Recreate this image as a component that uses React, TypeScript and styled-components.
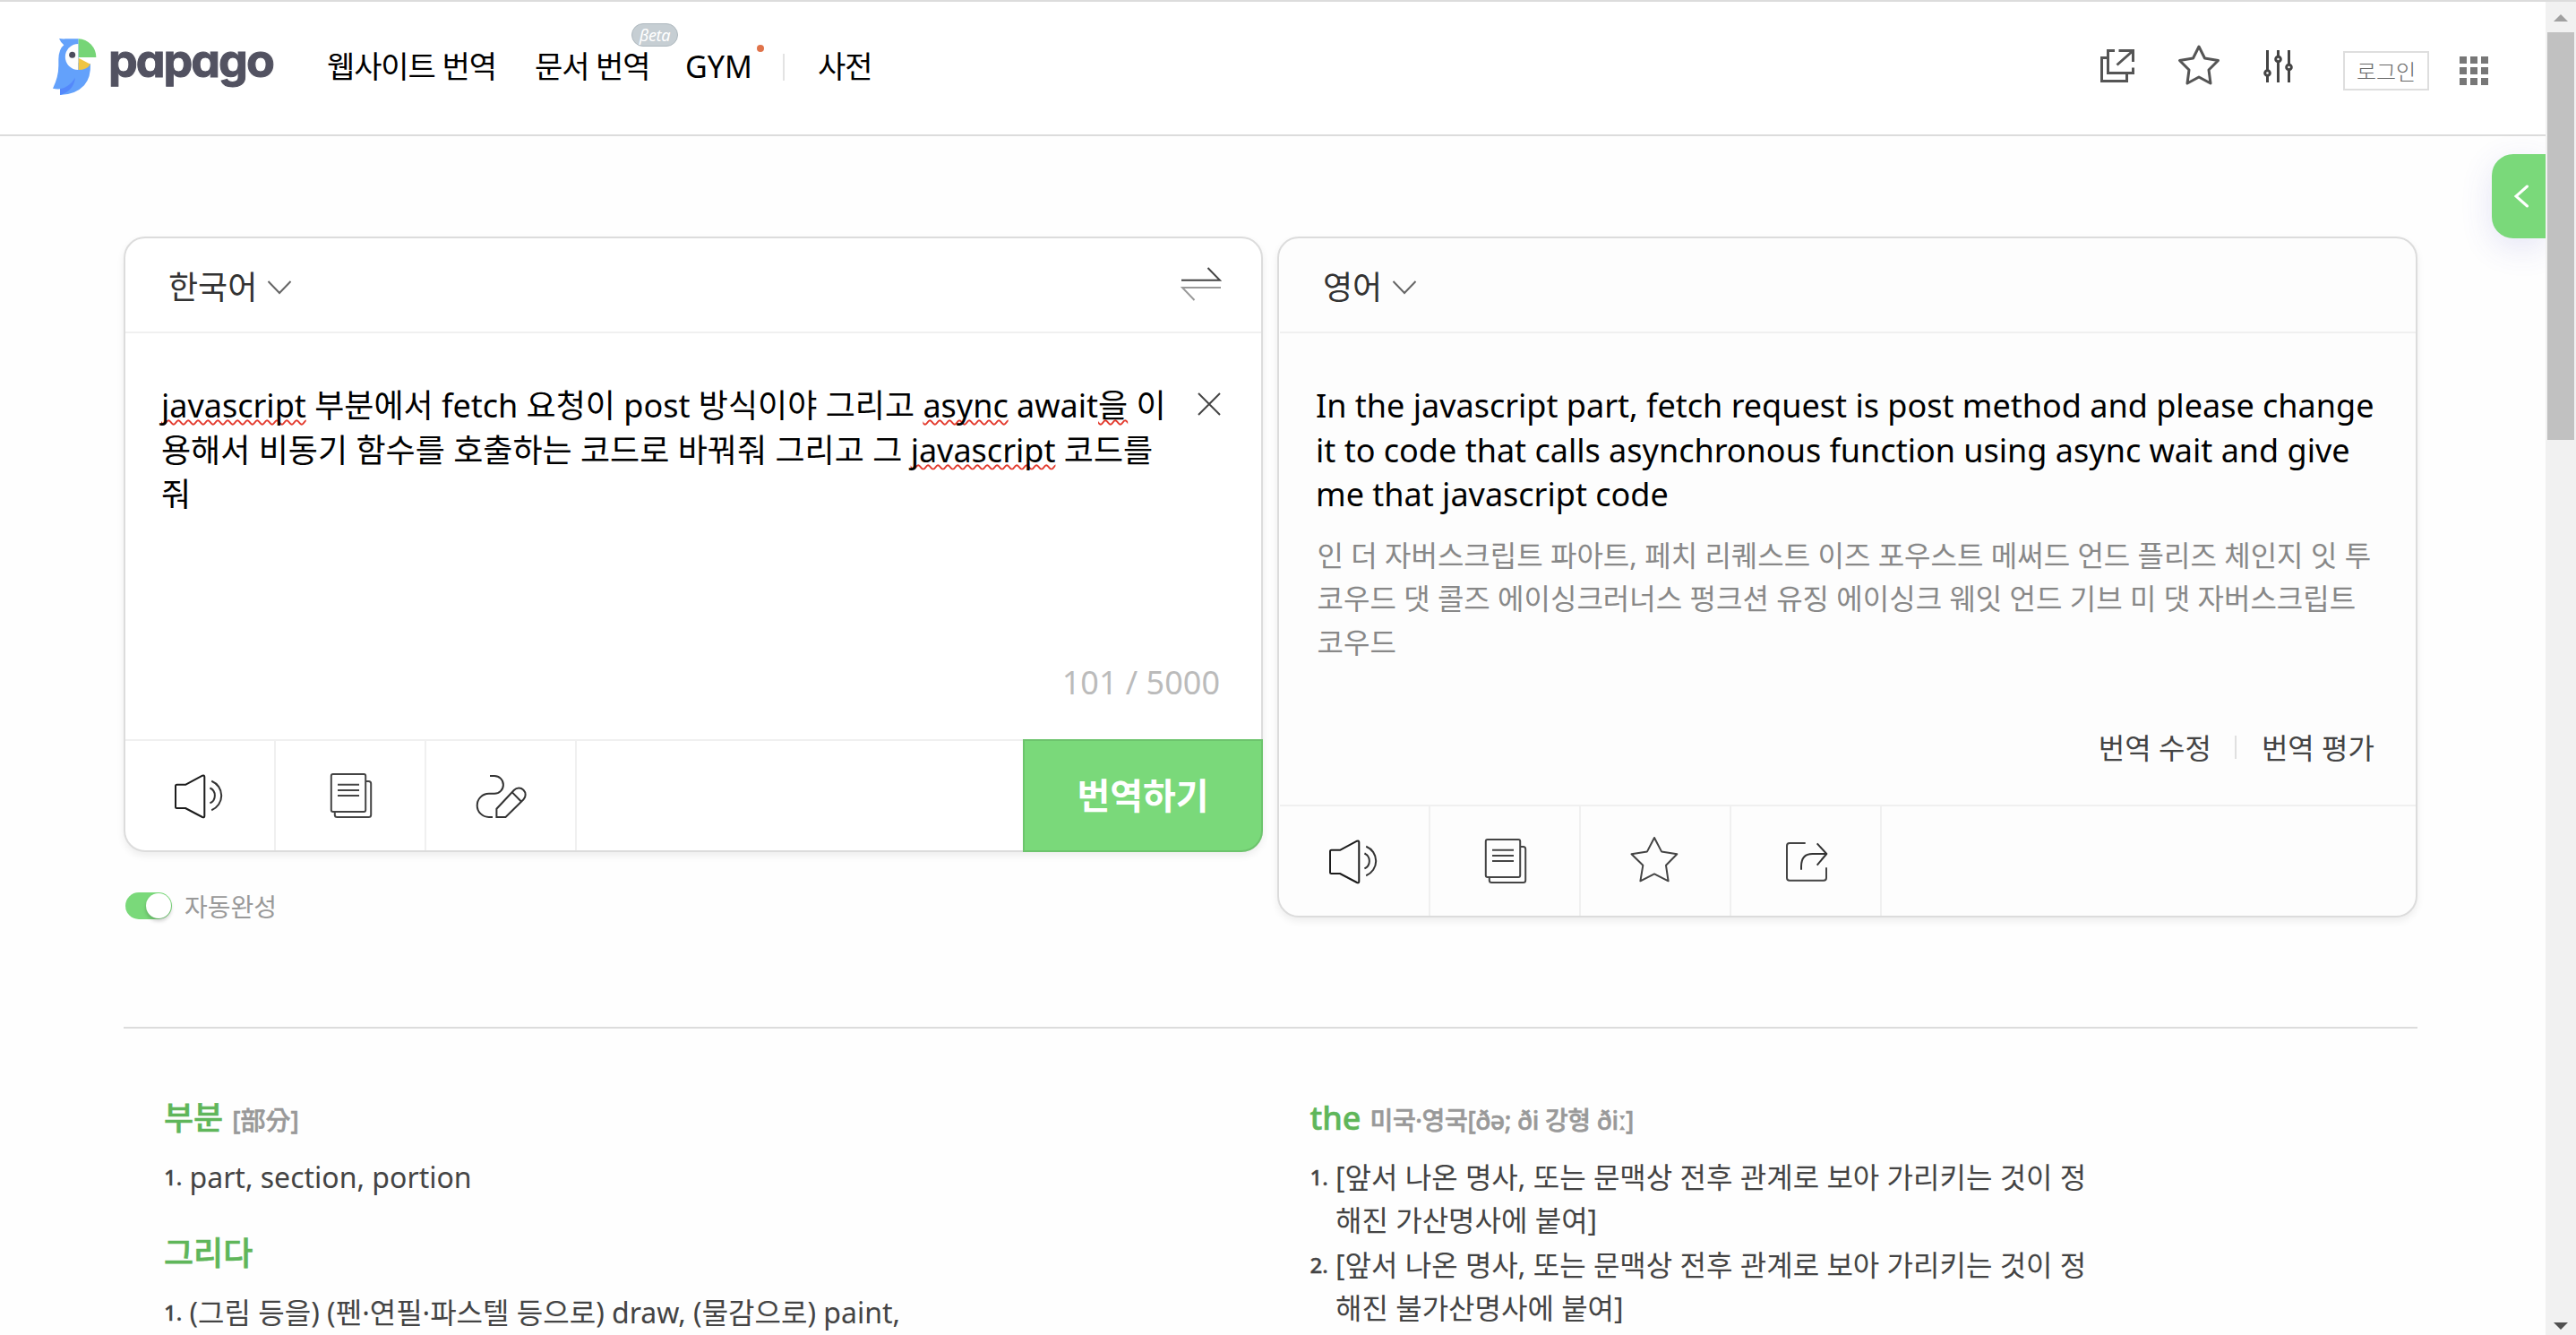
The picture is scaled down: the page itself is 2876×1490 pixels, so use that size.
import React from 'react';
import styled, { createGlobalStyle } from 'styled-components';

let GlobalStyle = createGlobalStyle`
  * { box-sizing: border-box; }
  body {
    margin: 0;
    background: #fff;
    overflow: hidden;
    font-family: "Noto Sans", "Noto Sans CJK KR", sans-serif;
  }
  svg { display: block; flex: none; }`

let Page = styled.div`
  position: relative;
  display: flex;
  height: 1490px;
  overflow: hidden;
  border-top: 2px solid #dcdcdc;`

let Content = styled.div`
  width: 2842px;
  background: #fefefe;`

let Header = styled.header`
  display: flex;
  align-items: flex-start;
  height: 150px;
  padding-left: 58px;
  background: #fff;
  border-bottom: 2px solid #dcdcdc;`

let Logo = styled.a`
  display: flex;
  padding-top: 38px;
  width: 303px;`

let Wordmark = styled.span`
  margin: -4px 0 0 13px;
  font-family: Inter, sans-serif;
  font-feature-settings: "cv11";
  font-size: 52px;
  font-weight: 700;
  line-height: 64px;
  letter-spacing: -2px;
  color: #525261;
  -webkit-text-stroke: 1px #525261;`

let Nav = styled.nav`
  display: flex;
  padding-top: 47px;
  font-size: 34px;
  line-height: 50px;
  white-space: nowrap;`

let NavItem = styled.a<{ $width: number; $spacing?: number }>`
  position: relative;
  width: ${(p) => p.$width}px;
  padding-left: 4px;
  color: #000;
  letter-spacing: ${(p) => p.$spacing ?? -1.1}px;`

let BetaBadge = styled.i`
  position: absolute;
  top: -23px;
  left: 112px;
  width: 52px;
  height: 26px;
  border: 1px solid #aeb8be;
  border-radius: 13px;
  background: #c6ced3;
  color: #fff;
  font-family: "Noto Sans", sans-serif;
  font-size: 18px;
  line-height: 24px;
  letter-spacing: -0.3px;
  text-align: center;`

let NewDot = styled.i`
  position: absolute;
  top: 1px;
  left: 84px;
  width: 8px;
  height: 8px;
  border-radius: 50%;
  background: #e0734a;`

let NavDivider = styled.i`
  width: 2px;
  height: 30px;
  margin: 11px 33px 0 1px;
  background: #e3e3e3;`

let Tools = styled.div`
  display: flex;
  margin-left: auto;
  padding-right: 64px;`

let ToolIcon = styled.a<{ $top: number; $right: number }>`
  margin: ${(p) => p.$top}px ${(p) => p.$right}px 0 0;`

let LoginButton = styled.a`
  width: 96px;
  height: 44px;
  margin: 55px 34px 0 0;
  border: 2px solid #dedede;
  color: #666;
  font-size: 24px;
  font-weight: 300;
  line-height: 42px;
  text-align: center;`

let Apps = styled.div`
  display: grid;
  grid-template-columns: repeat(3, 8px);
  grid-auto-rows: 8px;
  gap: 4px;
  margin-top: 61px;
  i { background: #777; }`

let Main = styled.main`
  padding: 112px 0 0 138px;
  width: 2699px;`

let Panels = styled.div`
  display: flex;
  align-items: flex-start;
  justify-content: space-between;
  height: 760px;`

let Panel = styled.section<{ $target?: boolean }>`
  display: flex;
  flex-direction: column;
  width: ${(p) => (p.$target ? 1273 : 1272)}px;
  height: ${(p) => (p.$target ? 760 : 687)}px;
  padding-left: ${(p) => (p.$target ? 1 : 0)}px;
  border: 2px solid #dcdcdc;
  border-radius: 24px;
  background: ${(p) => (p.$target ? '#fdfdfd' : '#fff')};
  box-shadow: 0 4px 8px rgba(0, 0, 0, 0.07);`

let PanelHead = styled.div`
  display: flex;
  justify-content: space-between;
  height: 106px;
  padding: 30px 44px 0 48px;
  border-bottom: 2px solid #f0f0f0;
  > svg { margin-top: -2px; }`

let Language = styled.div`
  display: flex;
  color: #333;
  font-size: 36px;
  line-height: 50px;
  svg { margin: 17px 0 0 11px; }`

let PanelBody = styled.div`
  display: flex;
  flex: 1;
  flex-direction: column;
  padding: 56px 46px 38px 40px;`

let SourceRow = styled.div`
  display: flex;
  justify-content: space-between;
  svg { margin: 10px -1px 0 0; }`

let BigText = styled.div`
  font-size: 36px;
  line-height: 49.5px;
  white-space: nowrap;
  color: #000;`

let Typo = styled.span`
  text-decoration: underline wavy #e3392c 1.5px;
  text-decoration-skip-ink: none;
  text-underline-offset: 2px;`

let Pronunciation = styled.div`
  margin: 19px 0 0 1.5px;
  color: #888;
  font-size: 32px;
  line-height: 48.5px;
  white-space: nowrap;`

let Counter = styled.div`
  margin-top: auto;
  text-align: right;
  color: #bbb;
  font-size: 36px;
  line-height: 50px;`

let Feedback = styled.div`
  display: flex;
  justify-content: flex-end;
  margin-top: auto;
  color: #444;
  font-size: 32px;
  line-height: 50px;
  i {
    width: 2px;
    height: 26px;
    margin: 11px 28px 0 26px;
    background: #e0e0e0;
  }`

let Toolbar = styled.div`
  display: flex;
  height: 124px;
  border-top: 2px solid #f0f0f0;`

let ToolCell = styled.div`
  display: flex;
  align-items: center;
  justify-content: center;
  width: 168px;
  border-right: 2px solid #f0f0f0;`

let TranslateButton = styled.button`
  width: 268px;
  margin: -2px -2px -2px auto;
  padding: 0;
  border: 2px solid #6dc46d;
  border-radius: 0 0 24px 0;
  background: #7ad97a;
  color: #fff;
  font-family: inherit;
  font-size: 40px;
  font-weight: 700;
  line-height: 50px;`

let AutoComplete = styled.div`
  display: flex;
  margin-top: 45px;
  padding-left: 2px;
  color: #999;
  font-size: 28px;
  line-height: 32px;`

let Switch = styled.span`
  display: flex;
  justify-content: flex-end;
  width: 52px;
  height: 30px;
  margin-right: 14px;
  padding: 1px;
  border-radius: 15px;
  background: #7ad97a;
  i {
    width: 28px;
    height: 28px;
    border-radius: 50%;
    background: #fff;
    box-shadow: 0 3px 4px rgba(0, 0, 0, 0.2);
  }`

let Dictionary = styled.div`
  display: flex;
  margin-top: 122px;
  padding: 75px 0 0 45px;
  border-top: 2px solid #dcdcdc;`

let DictColumn = styled.div`
  flex: none;
  width: 1279.5px;`

let Entry = styled.div`
  margin-bottom: 35.5px;`

let Word = styled.div`
  height: 50px;
  margin-bottom: 17px;
  color: #5fb65a;
  font-size: 36px;
  font-weight: 500;
  line-height: 50px;
  -webkit-text-stroke: 0.6px;`

let Reading = styled.small<{ $tight?: boolean }>`
  margin-left: 10px;
  color: #999;
  font-size: 28px;
  letter-spacing: ${(p) => (p.$tight ? -0.35 : 0)}px;`

let Meaning = styled.div`
  display: flex;
  margin-bottom: 1.5px;
  color: #444;
  font-size: 32px;
  line-height: 48px;
  white-space: nowrap;
  b {
    width: 28.5px;
    font-size: 24px;
    font-weight: 500;
    -webkit-text-stroke: 0.4px;
  }`

let SideTab = styled.div`
  position: absolute;
  top: 170px;
  left: 2782px;
  display: flex;
  align-items: center;
  width: 60px;
  height: 94px;
  padding-left: 24px;
  border-radius: 24px 0 0 24px;
  background: #7ad97a;
  box-shadow: 0 10px 36px rgba(70, 70, 190, 0.14);`

let Scrollbar = styled.div`
  position: relative;
  z-index: 1;
  display: flex;
  flex-direction: column;
  align-items: center;
  width: 34px;
  height: 1488px;
  padding-bottom: 6px;
  background: #f1f1f1;`

let Thumb = styled.div`
  width: 30px;
  height: 455px;
  margin: 12px 0 auto;
  background: #c1c1c1;`

let Arrow = styled.i<{ $down?: boolean }>`
  flex: none;
  margin-top: ${(p) => (p.$down ? 0 : 14)}px;
  border: 8px solid transparent;
  border-${(p) => (p.$down ? 'bottom' : 'top')}-width: 0;
  border-${(p) => (p.$down ? 'top-color: #505050' : 'bottom-color: #a0a0a0')};`

function Parrot() {
  return (
    <svg width="50" height="68" viewBox="54 60 150 204">
      <path fill="#63a1fb" d="M78 69Q90 71 100 70H143V150L183 154Q185 200 162 226Q132 258 81 258V238Q68 239 57 236Q76 198 76 160V138Q77 104 94 91Q83 82 78 69Z" />
      <path fill="#5488fb" d="M132 200Q112 232 81 238V258Q126 245 132 200Z" />
      <path fill="#fdfdfd" d="M142 87A43 43 0 0 0 142 174Z" />
      <path fill="#76d577" d="M143 70A59 62 0 0 1 202 132H143Z" />
      <path fill="#efc543" d="M143 134L183 155Q170 174 143 174Z" />
      <circle cx="122" cy="124" r="10.5" fill="#4b4c5b" />
    </svg>
  );
}

function IconBox({ children }: { children: React.ReactNode }) {
  return (
    <svg width="64" height="64" viewBox="0 0 64 64" fill="none" stroke="#333" strokeWidth="2" strokeLinejoin="round">
      {children}
    </svg>
  );
}

function SpeakerIcon() {
  return (
    <IconBox>
      <path stroke="#1c1c1c" d="M6.5 19.8H16L35 9.7Q37.3 8.8 37.3 11V54.7Q37.3 57 35 56L16 46H6.5Q5 46 5 44.5V21.3Q5 19.8 6.5 19.8Z" />
      <path d="M43.4 23.5A9.2 9.2 0 0 1 43.4 40.3M45.2 15.7A17.5 17.5 0 0 1 45.2 48.2" />
    </IconBox>
  );
}

function CopyIcon() {
  return (
    <IconBox>
      <g stroke="#444">
        <rect x="10.8" y="8" width="38.4" height="42" rx="2" />
        <path d="M18 19.8H42M18 26H42M18 32H42" />
        <path d="M49.5 16H52.5Q55.2 16 55.2 18.5V53.5Q55.2 56 52.5 56H17.5Q14.8 56 14.8 53.5V50" />
      </g>
    </IconBox>
  );
}

function PenIcon() {
  return (
    <IconBox>
      <path d="M20 10H25A9.9 9.9 0 0 1 25 29.8H18.8A13.1 13.1 0 0 0 18.8 56H23" />
      <path strokeLinejoin="miter" d="M27.4 56V46.7L47 25.8A7.3 7.3 0 0 1 57.5 36.2L37.5 56ZM44.9 28.4L54.6 38.2" />
    </IconBox>
  );
}

function StarIcon() {
  return (
    <IconBox>
      <path stroke="#444" d="M31 6L39 21.4L56.3 24.3L44 36.8L46.6 54.3L31 46.4L15.4 54.3L18.3 36.8L5.5 24.3L23 21.4Z" />
    </IconBox>
  );
}

function ShareIcon() {
  return (
    <IconBox>
      <path stroke="#444" d="M31.7 12H14Q11 12 11 15V50.7Q11 53.7 14 53.7H52Q55 53.7 55 50.7V39.3" />
      <path d="M27 41.7V38Q27 24 39.5 24H55M44.7 12.3L55.3 24L44.7 36.6" />
    </IconBox>
  );
}

function ChevronDown() {
  return (
    <svg width="28" height="16" viewBox="0 0 28 16" fill="none" stroke="#666" strokeWidth="2">
      <path d="M1.5 1L14 14L26.5 1" />
    </svg>
  );
}

let mainSense = '[앞서 나온 명사, 또는 문맥상 전후 관계로 보아 가리키는 것이 정';

export default function App() {
  return (
    <Page>
      <GlobalStyle />
      <Content>
        <Header>
          <Logo>
            <Parrot />
            <Wordmark>papago</Wordmark>
          </Logo>
          <Nav>
            <NavItem $width={232}>웹사이트 번역</NavItem>
            <NavItem $width={168}>문서 번역<BetaBadge>βeta</BetaBadge></NavItem>
            <NavItem $width={112} $spacing={0}>GYM<NewDot /></NavItem>
            <NavDivider />
            <NavItem $width={80}>사전</NavItem>
          </Nav>
          <Tools>
            <ToolIcon $top={52} $right={46}>
              <svg width="42" height="40" viewBox="0 0 42 40" fill="none" stroke="#555" strokeWidth="3">
                <path d="M9.5 10.5H3.5V36.5H31.5V29M18 2.5H10.5V27.5H38.5V21.5M22.5 2.5H38.5V15M38 3L20.5 18.5" />
              </svg>
            </ToolIcon>
            <ToolIcon $top={47} $right={48}>
              <svg width="48" height="48" viewBox="0 0 48 48" fill="none" stroke="#555" strokeWidth="3" strokeLinejoin="round">
                <path d="M24 3L30.5 16L45.5 18.5L35 29L37 44L24 37L11 44L13 29L2.5 18.5L17.5 16Z" />
              </svg>
            </ToolIcon>
            <ToolIcon $top={52} $right={55}>
              <svg width="34" height="40" viewBox="0 0 34 40" fill="#fff" stroke="#444" strokeWidth="3">
                <path d="M4.5 2V38M16.5 2V38M28.5 2V38" />
                <circle cx="4.5" cy="27.5" r="2.8" />
                <circle cx="16.5" cy="12" r="2.8" />
                <circle cx="28.5" cy="21" r="2.8" />
              </svg>
            </ToolIcon>
            <LoginButton>로그인</LoginButton>
            <Apps>
              {Array.from({ length: 9 }, (_, i) => <i key={i} />)}
            </Apps>
          </Tools>
        </Header>

        <Main>
          <Panels>
            <div>
              <Panel>
                <PanelHead>
                  <Language>한국어<ChevronDown /></Language>
                  <svg width="46" height="42" viewBox="0 0 46 42" fill="none" strokeWidth="2">
                    <path stroke="#444" d="M1 18.8H44L30.5 5" />
                    <path stroke="#999" d="M45 27H2L15.5 41" />
                  </svg>
                </PanelHead>
                <PanelBody>
                  <SourceRow>
                    <BigText>
                      <div><Typo>javascript</Typo> 부분에서 fetch 요청이 post 방식이야 그리고 <Typo>async</Typo> await<Typo>을</Typo> 이</div>
                      <div>용해서 비동기 함수를 호출하는 코드로 바꿔줘 그리고 그 <Typo>javascript</Typo> 코드를</div>
                      <div>줘</div>
                    </BigText>
                    <svg width="26" height="26" viewBox="0 0 26 26" stroke="#444" strokeWidth="2">
                      <path d="M1 1L25 25M25 1L1 25" />
                    </svg>
                  </SourceRow>
                  <Counter>101 / 5000</Counter>
                </PanelBody>
                <Toolbar>
                  <ToolCell><SpeakerIcon /></ToolCell>
                  <ToolCell><CopyIcon /></ToolCell>
                  <ToolCell><PenIcon /></ToolCell>
                  <TranslateButton>번역하기</TranslateButton>
                </Toolbar>
              </Panel>
              <AutoComplete>
                <Switch><i /></Switch>
                자동완성
              </AutoComplete>
            </div>

            <Panel $target>
              <PanelHead>
                <Language>영어<ChevronDown /></Language>
              </PanelHead>
              <PanelBody>
                <BigText>
                  <div>In the javascript part, fetch request is post method and please change</div>
                  <div>it to code that calls asynchronous function using async wait and give</div>
                  <div>me that javascript code</div>
                </BigText>
                <Pronunciation>
                  <div>인 더 자버스크립트 파아트, 페치 리퀘스트 이즈 포우스트 메써드 언드 플리즈 체인지 잇 투</div>
                  <div>코우드 댓 콜즈 에이싱크러너스 펑크션 유징 에이싱크 웨잇 언드 기브 미 댓 자버스크립트</div>
                  <div>코우드</div>
                </Pronunciation>
                <Feedback>번역 수정<i />번역 평가</Feedback>
              </PanelBody>
              <Toolbar>
                <ToolCell><SpeakerIcon /></ToolCell>
                <ToolCell><CopyIcon /></ToolCell>
                <ToolCell><StarIcon /></ToolCell>
                <ToolCell><ShareIcon /></ToolCell>
              </Toolbar>
            </Panel>
          </Panels>

          <Dictionary>
            <DictColumn>
              <Entry>
                <Word>부분<Reading>[部分]</Reading></Word>
                <Meaning><b>1.</b>part, section, portion</Meaning>
              </Entry>
              <Entry>
                <Word>그리다</Word>
                <Meaning><b>1.</b>(그림 등을) (펜·연필·파스텔 등으로) draw, (물감으로) paint,</Meaning>
              </Entry>
            </DictColumn>
            <DictColumn>
              <Entry>
                <Word>the<Reading $tight>미국·영국[ðə; ði 강형 ðiː]</Reading></Word>
                <Meaning><b>1.</b><div>{mainSense}<br />해진 가산명사에 붙여]</div></Meaning>
                <Meaning><b>2.</b><div>{mainSense}<br />해진 불가산명사에 붙여]</div></Meaning>
              </Entry>
            </DictColumn>
          </Dictionary>
        </Main>
      </Content>

      <Scrollbar>
        <Arrow />
        <Thumb />
        <Arrow $down />
      </Scrollbar>
      <SideTab>
        <svg width="18" height="26" viewBox="0 0 18 26" fill="none" stroke="#fff" strokeWidth="3" strokeLinecap="round">
          <path d="M15.5 2L3 13L15.5 24" />
        </svg>
      </SideTab>
    </Page>
  );
}
